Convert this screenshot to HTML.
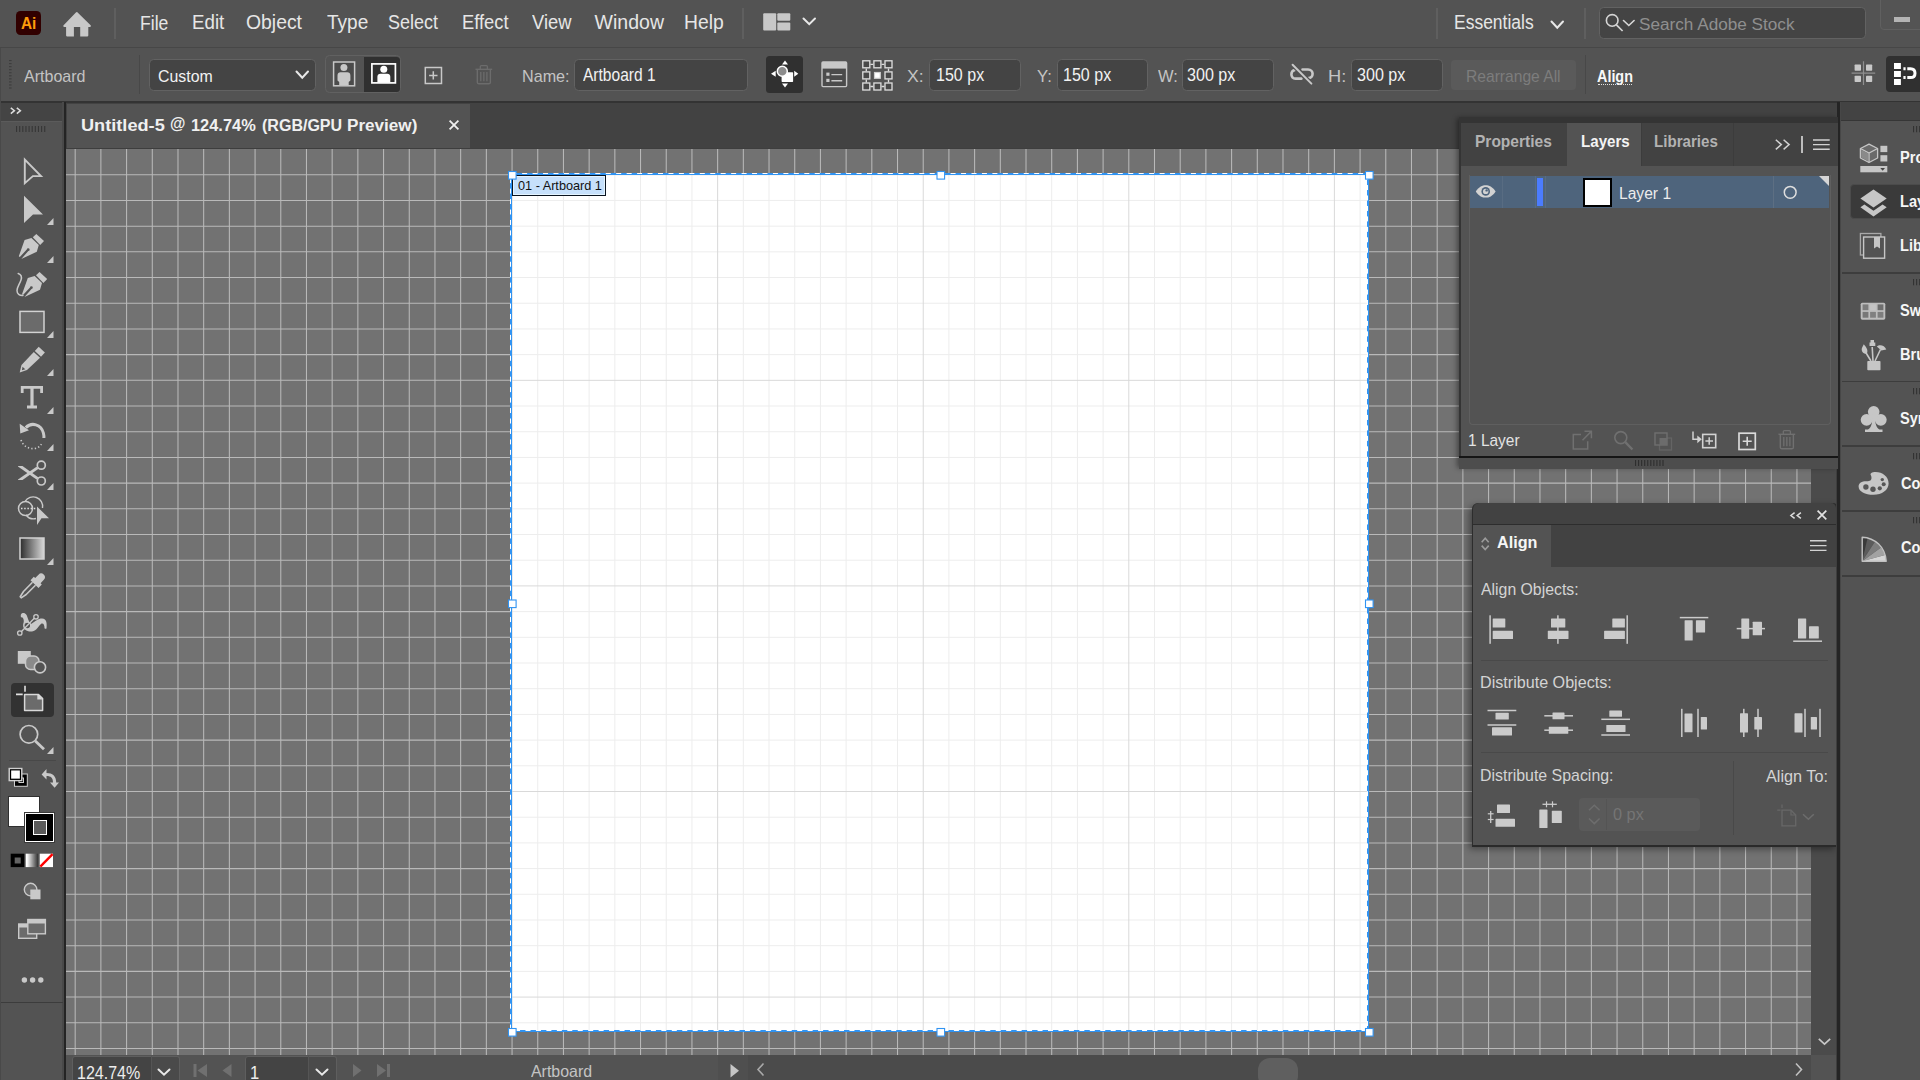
<!DOCTYPE html>
<html lang="en"><head><meta charset="utf-8"><title>Untitled-5 @ 124.74% (RGB/GPU Preview)</title>
<style>
html,body{margin:0;padding:0;}
body{width:1920px;height:1080px;overflow:hidden;position:relative;background:#535353;font-family:"Liberation Sans",sans-serif;}
div,svg,span{position:absolute;box-sizing:border-box;}
.t{white-space:pre;line-height:1;transform-origin:0 0;}
svg{overflow:visible;}

</style></head>
<body>
<div style="left:0px;top:0px;width:1920px;height:47px;background:#535353;"></div>
<div style="left:0px;top:47px;width:1920px;height:1px;background:#474747;"></div>
<div style="left:0px;top:48px;width:1920px;height:53px;background:#535353;"></div>
<div style="left:0px;top:100.8px;width:1920px;height:2.2px;background:#333;"></div>
<div style="left:66px;top:103px;width:1772px;height:46px;background:#424242;"></div>
<div style="left:67px;top:104px;width:403px;height:45px;background:#535353;"></div>
<div style="left:66px;top:148px;width:1772px;height:1px;background:#3e3e3e;"></div>
<div style="left:66px;top:149px;width:1745px;height:906px;background:#727272;overflow:hidden"><svg style="left:0;top:0" width="1745" height="906"><path d="M9.18 0V906M34.88 0V906M60.58 0V906M86.28 0V906M111.98 0V906M137.67 0V906M163.37 0V906M189.07 0V906M214.77 0V906M240.47 0V906M266.16 0V906M291.86 0V906M317.56 0V906M343.26 0V906M368.96 0V906M394.65 0V906M420.35 0V906M446.05 0V906M471.75 0V906M497.45 0V906M523.14 0V906M548.84 0V906M574.54 0V906M600.24 0V906M625.94 0V906M651.63 0V906M677.33 0V906M703.03 0V906M728.73 0V906M754.43 0V906M780.12 0V906M805.82 0V906M831.52 0V906M857.22 0V906M882.92 0V906M908.61 0V906M934.31 0V906M960.01 0V906M985.71 0V906M1011.41 0V906M1037.10 0V906M1062.80 0V906M1088.50 0V906M1114.20 0V906M1139.90 0V906M1165.59 0V906M1191.29 0V906M1216.99 0V906M1242.69 0V906M1268.39 0V906M1294.08 0V906M1319.78 0V906M1345.48 0V906M1371.18 0V906M1396.88 0V906M1422.57 0V906M1448.27 0V906M1473.97 0V906M1499.67 0V906M1525.37 0V906M1551.06 0V906M1576.76 0V906M1602.46 0V906M1628.16 0V906M1653.86 0V906M1679.55 0V906M1705.25 0V906M1730.95 0V906M0 25.75H1745M0 51.45H1745M0 77.15H1745M0 102.84H1745M0 128.54H1745M0 154.24H1745M0 179.94H1745M0 205.64H1745M0 231.33H1745M0 257.03H1745M0 282.73H1745M0 308.43H1745M0 334.13H1745M0 359.82H1745M0 385.52H1745M0 411.22H1745M0 436.92H1745M0 462.62H1745M0 488.31H1745M0 514.01H1745M0 539.71H1745M0 565.41H1745M0 591.11H1745M0 616.80H1745M0 642.50H1745M0 668.20H1745M0 693.90H1745M0 719.60H1745M0 745.29H1745M0 770.99H1745M0 796.69H1745M0 822.39H1745M0 848.09H1745M0 873.78H1745M0 899.48H1745" stroke="#fff" stroke-opacity="0.5" stroke-width="1.05" fill="none"/></svg></div>
<div style="left:512px;top:175px;width:857px;height:857px;background:#fff;overflow:hidden"><svg style="left:0;top:0" width="857" height="857"><path d="M25.75 0V857M0 25.45H857M51.45 0V857M0 51.15H857M77.14 0V857M0 76.84H857M102.84 0V857M0 102.54H857M128.54 0V857M0 128.24H857M154.24 0V857M0 153.94H857M179.94 0V857M0 179.64H857M231.33 0V857M0 231.03H857M257.03 0V857M0 256.73H857M282.73 0V857M0 282.43H857M308.43 0V857M0 308.13H857M334.12 0V857M0 333.82H857M359.82 0V857M0 359.52H857M385.52 0V857M0 385.22H857M436.92 0V857M0 436.62H857M462.61 0V857M0 462.31H857M488.31 0V857M0 488.01H857M514.01 0V857M0 513.71H857M539.71 0V857M0 539.41H857M565.41 0V857M0 565.11H857M591.10 0V857M0 590.80H857M642.50 0V857M0 642.20H857M668.20 0V857M0 667.90H857M693.90 0V857M0 693.60H857M719.59 0V857M0 719.29H857M745.29 0V857M0 744.99H857M770.99 0V857M0 770.69H857M796.69 0V857M0 796.39H857M848.08 0V857M0 847.78H857" stroke="#ededed" fill="none"/><path d="M0.05 0V857M0 -0.25H857M205.63 0V857M0 205.33H857M411.22 0V857M0 410.92H857M616.80 0V857M0 616.50H857M822.39 0V857M0 822.09H857" stroke="#d9d9d9" fill="none"/></svg></div>
<div style="left:512px;top:175px;width:94.3px;height:21px;background:#c6e0fb;border:1px solid #0a1420;box-shadow:inset 0 0 0 1px #e4f4ff;"></div>
<span class="t" style="left:517.58px;top:178.56px;font-size:13.4px;color:#111;transform:scaleX(0.9472);">01 - Artboard 1</span>
<svg style="left:512px;top:175px;" width="857" height="857" viewBox="0 0 857 857"><rect x="-0.5" y="-0.5" width="857" height="857" fill="none" stroke="#3093f2" stroke-width="1"/><rect x="-1.5" y="-1.5" width="857" height="857" fill="none" stroke="#3093f2" stroke-width="1"/><rect x="-1.5" y="-1.5" width="857" height="857" fill="none" stroke="#fff" stroke-width="1" stroke-dasharray="5 5.45" stroke-dashoffset="-1.2"/><rect x="-3.5" y="-3.5" width="7.6" height="7.6" fill="#fff" stroke="#3093f2" stroke-width="1.1"/><rect x="425.0" y="-3.5" width="7.6" height="7.6" fill="#fff" stroke="#3093f2" stroke-width="1.1"/><rect x="853.5" y="-3.5" width="7.6" height="7.6" fill="#fff" stroke="#3093f2" stroke-width="1.1"/><rect x="-3.5" y="425.0" width="7.6" height="7.6" fill="#fff" stroke="#3093f2" stroke-width="1.1"/><rect x="853.5" y="425.0" width="7.6" height="7.6" fill="#fff" stroke="#3093f2" stroke-width="1.1"/><rect x="-3.5" y="853.5" width="7.6" height="7.6" fill="#fff" stroke="#3093f2" stroke-width="1.1"/><rect x="425.0" y="853.5" width="7.6" height="7.6" fill="#fff" stroke="#3093f2" stroke-width="1.1"/><rect x="853.5" y="853.5" width="7.6" height="7.6" fill="#fff" stroke="#3093f2" stroke-width="1.1"/></svg>
<div style="left:1811px;top:149px;width:26px;height:906px;background:#4b4b4b;"></div>
<div style="left:66px;top:1055px;width:1771px;height:25px;background:#535353;"></div>
<div style="left:748px;top:1055px;width:1063px;height:25px;background:#4b4b4b;"></div>
<div style="left:1258px;top:1058px;width:40px;height:30px;background:#5f5f5f;border-radius:12px;"></div>
<div style="left:718px;top:1055px;width:30px;height:25px;background:#4f4f4f;"></div>
<div style="left:72px;top:1056px;width:80px;height:30px;background:#444;border:1px solid #5e5e5e;border-radius:3px 0 0 0;"></div>
<div style="left:151px;top:1056px;width:29px;height:30px;background:#4a4a4a;border:1px solid #5e5e5e;border-left:1px solid #555;border-radius:0 3px 0 0;"></div>
<span class="t" style="left:76.56px;top:1065.30px;font-size:17.6px;color:#ededed;transform:scaleX(0.9113);">124.74%</span>
<div style="left:245px;top:1056px;width:64px;height:30px;background:#444;border:1px solid #5e5e5e;border-radius:3px 0 0 0;"></div>
<div style="left:308px;top:1056px;width:29px;height:30px;background:#4a4a4a;border:1px solid #5e5e5e;border-left:1px solid #555;border-radius:0 3px 0 0;"></div>
<span class="t" style="left:250.42px;top:1065.30px;font-size:17.6px;color:#ededed;transform:scaleX(0.9400);">1</span>
<span class="t" style="left:530.53px;top:1062.83px;font-size:16.5px;color:#c4c4c4;transform:scaleX(0.9647);">Artboard</span>
<svg style="left:158.3px;top:1069.05px;" width="12" height="6.5" viewBox="0 0 12 6.5"><path d="M0.5 0.5L6.0 5.7L11.5 0.5" fill="none" stroke="#e8e8e8" stroke-width="2" stroke-linecap="round" stroke-linejoin="miter"/></svg>
<svg style="left:316.3px;top:1069.05px;" width="12" height="6.5" viewBox="0 0 12 6.5"><path d="M0.5 0.5L6.0 5.7L11.5 0.5" fill="none" stroke="#e8e8e8" stroke-width="2" stroke-linecap="round" stroke-linejoin="miter"/></svg>
<svg style="left:193px;top:1064px;" width="45" height="14" viewBox="0 0 45 14"><rect x="0.5" y="0" width="3" height="13" fill="#707070"/><path d="M14 0V13L4.5 6.5Z" fill="#707070"/><path d="M38.5 0V13L29.5 6.5Z" fill="#707070"/></svg>
<svg style="left:353px;top:1064px;" width="45" height="14" viewBox="0 0 45 14"><path d="M0 0V13L8.5 6.5Z" fill="#707070"/><path d="M24 0V13L33 6.5Z" fill="#707070"/><rect x="34" y="0" width="3" height="13" fill="#707070"/></svg>
<svg style="left:729.5px;top:1064px;" width="10" height="14" viewBox="0 0 10 14"><path d="M0.5 0V13.5L9 6.75Z" fill="#c6c6c6"/></svg>
<svg style="left:756.5px;top:1062.5px;" width="8" height="13" viewBox="0 0 8 13"><path d="M6.5 0.5L1 6.5L6.5 12.5" fill="none" stroke="#a8a8a8" stroke-width="1.6"/></svg>
<svg style="left:1795px;top:1062.5px;" width="8" height="13" viewBox="0 0 8 13"><path d="M1 0.5L6.5 6.5L1 12.5" fill="none" stroke="#c0c0c0" stroke-width="1.6"/></svg>
<svg style="left:1818px;top:1038px;" width="13" height="8" viewBox="0 0 13 8"><path d="M0.8 0.8L6.5 6.2L12.2 0.8" fill="none" stroke="#c8c8c8" stroke-width="1.7"/></svg>
<div style="left:1811px;top:1055px;width:26px;height:25px;background:#535353;"></div>
<span class="t" style="left:140.28px;top:13.89px;font-size:19.5px;color:#e6e6e6;transform:scaleX(0.9016);">File</span>
<span class="t" style="left:192.02px;top:12.89px;font-size:19.5px;color:#e6e6e6;transform:scaleX(0.9605);">Edit</span>
<span class="t" style="left:246.21px;top:12.89px;font-size:19.5px;color:#e6e6e6;transform:scaleX(0.9937);">Object</span>
<span class="t" style="left:326.87px;top:12.89px;font-size:19.5px;color:#e6e6e6;transform:scaleX(0.9749);">Type</span>
<span class="t" style="left:388.13px;top:12.89px;font-size:19.5px;color:#e6e6e6;transform:scaleX(0.9209);">Select</span>
<span class="t" style="left:461.62px;top:12.89px;font-size:19.5px;color:#e6e6e6;transform:scaleX(0.9395);">Effect</span>
<span class="t" style="left:531.98px;top:12.89px;font-size:19.5px;color:#e6e6e6;transform:scaleX(0.9400);">View</span>
<span class="t" style="left:594.62px;top:12.89px;font-size:19.5px;color:#e6e6e6;">Window</span>
<span class="t" style="left:684.43px;top:12.89px;font-size:19.5px;color:#e6e6e6;transform:scaleX(0.9906);">Help</span>
<div style="left:1599.2px;top:6.6px;width:267.2px;height:32.3px;background:#444;border:1.4px solid #626262;border-radius:4.5px;"></div>
<span class="t" style="left:1454.29px;top:13.39px;font-size:19.5px;color:#e6e6e6;transform:scaleX(0.8961);">Essentials</span>
<span class="t" style="left:1638.56px;top:15.66px;font-size:17.3px;color:#8f8f8f;transform:scaleX(0.9931);">Search Adobe Stock</span>
<div style="left:113.5px;top:8px;width:2px;height:31px;background:#5f5f5f;"></div>
<div style="left:741.5px;top:8px;width:2px;height:31px;background:#5f5f5f;"></div>
<div style="left:1435.5px;top:8px;width:2px;height:31px;background:#5f5f5f;"></div>
<div style="left:1583.5px;top:8px;width:2px;height:31px;background:#5f5f5f;"></div>
<div style="left:1880px;top:-4px;width:50px;height:33.5px;background:#545454;border:1px solid #606060;border-radius:4px;"></div>
<div style="left:1894px;top:17px;width:16px;height:5px;background:#b4b4b4;"></div>
<svg style="left:803.05px;top:18.0px;" width="12.5" height="7" viewBox="0 0 12.5 7"><path d="M0.5 0.5L6.25 6.2L12.0 0.5" fill="none" stroke="#e8e8e8" stroke-width="2" stroke-linecap="round" stroke-linejoin="miter"/></svg>
<svg style="left:1550.75px;top:21.05px;" width="12.5" height="7.5" viewBox="0 0 12.5 7.5"><path d="M0.5 0.5L6.25 6.7L12.0 0.5" fill="none" stroke="#e8e8e8" stroke-width="2" stroke-linecap="round" stroke-linejoin="miter"/></svg>
<svg style="left:1623.1000000000001px;top:19.950000000000003px;" width="11.6" height="6.3" viewBox="0 0 11.6 6.3"><path d="M0.5 0.5L5.8 5.5L11.1 0.5" fill="none" stroke="#d8d8d8" stroke-width="1.6" stroke-linecap="round" stroke-linejoin="miter"/></svg>
<span class="t" style="left:24.03px;top:68.85px;font-size:16.6px;color:#c4c4c4;transform:scaleX(0.9668);">Artboard</span>
<div style="left:149.1px;top:58.6px;width:167.3px;height:32.199999999999996px;background:#444444;border:1.4px solid #626262;border-radius:4.5px;"></div>
<span class="t" style="left:158.26px;top:68.85px;font-size:16.6px;color:#f2f2f2;transform:scaleX(0.9570);">Custom</span>
<svg style="left:296.05px;top:71.25px;" width="12.5" height="7.5" viewBox="0 0 12.5 7.5"><path d="M0.5 0.5L6.25 6.7L12.0 0.5" fill="none" stroke="#e8e8e8" stroke-width="2" stroke-linecap="round" stroke-linejoin="miter"/></svg>
<div style="left:325.2px;top:55.3px;width:76.2px;height:37.6px;background:#535353;border:1.3px solid #616161;border-radius:4.5px;"></div>
<div style="left:364.4px;top:56.6px;width:35.8px;height:35px;background:#303030;border-radius:0 3.5px 3.5px 0;"></div>
<span class="t" style="left:521.75px;top:68.85px;font-size:16.6px;color:#c4c4c4;transform:scaleX(0.9738);">Name:</span>
<div style="left:574.1px;top:58.6px;width:173.8px;height:32.199999999999996px;background:#444444;border:1.4px solid #626262;border-radius:4.5px;"></div>
<span class="t" style="left:582.59px;top:67.13px;font-size:17.8px;color:#f2f2f2;transform:scaleX(0.8746);">Artboard 1</span>
<div style="left:766.2px;top:55.5px;width:37px;height:37px;background:#303030;border-radius:3.5px;"></div>
<span class="t" style="left:907.32px;top:68.85px;font-size:16.6px;color:#c4c4c4;transform:scaleX(1.0632);">X:</span>
<div style="left:929.1px;top:58.6px;width:91.8px;height:32.199999999999996px;background:#444444;border:1.4px solid #626262;border-radius:4.5px;"></div>
<span class="t" style="left:935.53px;top:67.13px;font-size:17.8px;color:#f2f2f2;transform:scaleX(0.9018);">150 px</span>
<span class="t" style="left:1036.63px;top:68.85px;font-size:16.6px;color:#c4c4c4;transform:scaleX(1.0091);">Y:</span>
<div style="left:1056.6px;top:58.6px;width:91.3px;height:32.199999999999996px;background:#444444;border:1.4px solid #626262;border-radius:4.5px;"></div>
<span class="t" style="left:1062.53px;top:67.13px;font-size:17.8px;color:#f2f2f2;transform:scaleX(0.9018);">150 px</span>
<span class="t" style="left:1158.09px;top:68.85px;font-size:16.6px;color:#c4c4c4;transform:scaleX(0.9919);">W:</span>
<div style="left:1182.1px;top:58.6px;width:91.8px;height:32.199999999999996px;background:#444444;border:1.4px solid #626262;border-radius:4.5px;"></div>
<span class="t" style="left:1187.30px;top:67.13px;font-size:17.8px;color:#f2f2f2;transform:scaleX(0.9063);">300 px</span>
<span class="t" style="left:1327.80px;top:68.85px;font-size:16.6px;color:#c4c4c4;transform:scaleX(1.1026);">H:</span>
<div style="left:1350.6px;top:58.6px;width:92.3px;height:32.199999999999996px;background:#444444;border:1.4px solid #626262;border-radius:4.5px;"></div>
<span class="t" style="left:1356.80px;top:67.13px;font-size:17.8px;color:#f2f2f2;transform:scaleX(0.9058);">300 px</span>
<div style="left:1451px;top:60px;width:125px;height:30px;background:#5a5a5a;border-radius:4px;"></div>
<span class="t" style="left:1466.34px;top:68.85px;font-size:16.6px;color:#7d7d7d;transform:scaleX(0.9406);">Rearrange All</span>
<div style="left:1584.5px;top:55px;width:1px;height:39px;background:#484848;"></div>
<div style="left:139px;top:55px;width:1px;height:39px;background:#484848;"></div>
<span class="t" style="left:1596.59px;top:68.85px;font-size:16.6px;color:#f8f8f8;font-weight:bold;transform:scaleX(0.8664);">Align</span>
<div style="left:1597.5px;top:83.5px;width:34.5px;height:1.5px;border-top:1.5px dotted #e0e0e0;"></div>
<div style="left:1886px;top:55.7px;width:40px;height:36.8px;background:#303030;border-radius:4px;"></div>
<span class="t" style="left:80.95px;top:117.88px;font-size:16.8px;color:#f0f0f0;font-weight:bold;transform:scaleX(1.0827);">Untitled-5</span>
<span class="t" style="left:169.58px;top:115.88px;font-size:16.8px;color:#f0f0f0;font-weight:bold;transform:scaleX(0.9400);">@</span>
<span class="t" style="left:191.04px;top:117.88px;font-size:16.8px;color:#f0f0f0;font-weight:bold;transform:scaleX(0.9774);">124.74%</span>
<span class="t" style="left:261.61px;top:117.88px;font-size:16.8px;color:#f0f0f0;font-weight:bold;transform:scaleX(0.9551);">(RGB/GPU</span>
<span class="t" style="left:347.32px;top:117.88px;font-size:16.8px;color:#f0f0f0;font-weight:bold;transform:scaleX(1.0191);">Preview)</span>
<svg style="left:449px;top:119.6px;" width="10" height="10" viewBox="0 0 10 10"><path d="M0.6 0.6L9.4 9.4M9.4 0.6L0.6 9.4" stroke="#efefef" stroke-width="1.8" fill="none"/></svg>
<div style="left:16px;top:11.4px;width:24.8px;height:23.8px;background:#310000;border-radius:4.5px;"></div>
<span class="t" style="left:20.99px;top:15.19px;font-size:16.2px;color:#ff9d0a;font-weight:bold;transform:scaleX(0.9500);">Ai</span>
<svg style="left:62px;top:11px;" width="30" height="26" viewBox="0 0 30 26"><path d="M15.1 1L28.6 14.2C29.3 15 28.8 15.9 27.9 15.9H26.3V24.6C26.3 25.1 26 25.4 25.5 25.4H18.2V16H11.9V25.4H4.9C4.4 25.4 4.1 25.1 4.1 24.6V15.9H2.3C1.4 15.9 0.9 15 1.6 14.2L13.9 1.5C14.3 1 14.7 0.8 15.1 1Z" fill="#c8c8c8"/></svg>
<svg style="left:763px;top:13px;" width="28" height="18" viewBox="0 0 28 18"><rect x="0.2" y="0.2" width="13" height="17.4" rx="1" fill="#c8c8c8"/><rect x="14.3" y="0.2" width="13" height="7.6" rx="1" fill="#c8c8c8"/><rect x="14.3" y="9.5" width="13" height="8.1" rx="1" fill="#c8c8c8"/></svg>
<svg style="left:1605px;top:13px;" width="19" height="19" viewBox="0 0 19 19"><circle cx="7.2" cy="7.4" r="5.8" fill="none" stroke="#d4d4d4" stroke-width="1.6"/><path d="M11.4 11.8L17.6 18" stroke="#d4d4d4" stroke-width="1.7"/></svg>
<svg style="left:332px;top:60px;" width="24" height="27" viewBox="0 0 24 27"><rect x="1.6" y="2" width="21" height="23.8" fill="#4b4b4b" stroke="#c8c8c8" stroke-width="1.5"/><circle cx="11.9" cy="7.6" r="3.5" fill="#c8c8c8"/><path d="M5.5 15.5C5.5 13.5 6.8 12.3 8.5 12.3H15.4C17.1 12.3 18.4 13.5 18.4 15.5V20.5L16.7 22V25H7.2V22L5.5 20.5Z" fill="#c8c8c8"/></svg>
<svg style="left:370px;top:62px;" width="28" height="23" viewBox="0 0 28 23"><rect x="1.9" y="1.9" width="23.5" height="19" fill="#303030" stroke="#fff" stroke-width="1.7"/><circle cx="13.8" cy="7.3" r="3.5" fill="#fff"/><path d="M7.4 20.5V14.8C7.4 12.8 8.6 11.7 10.4 11.7H17.3C19.1 11.7 20.3 12.8 20.3 14.8V20.5Z" fill="#fff"/></svg>
<svg style="left:424px;top:66px;" width="19" height="19" viewBox="0 0 19 19"><rect x="1.3" y="1.5" width="16.2" height="16" fill="none" stroke="#c8c8c8" stroke-width="1.5"/><path d="M9.3 5.2V13.6M5.1 9.4H13.5" stroke="#c8c8c8" stroke-width="1.5"/></svg>
<svg style="left:474.7px;top:64.8px;" width="18.0" height="20.0" viewBox="0 0 18.0 20.0"><g transform="scale(1.0)"><path d="M0.5 4.3H17.2" stroke="#6c6c6c" stroke-width="1.4"/><path d="M5.3 4V1.6C5.3 1 5.7 0.7 6.3 0.7H11.4C12 0.7 12.4 1 12.4 1.6V4" fill="none" stroke="#6c6c6c" stroke-width="1.3"/><path d="M2.3 4.5V17.2C2.3 18.2 3 18.8 4 18.8H13.7C14.7 18.8 15.4 18.2 15.4 17.2V4.5" fill="none" stroke="#6c6c6c" stroke-width="1.4"/><path d="M5.8 7V16.2M8.85 7V16.2M11.9 7V16.2" stroke="#6c6c6c" stroke-width="1.3"/></g></svg>
<svg style="left:765.6px;top:54.7px;" width="38" height="38" viewBox="0 0 38 38"><rect x="15.6" y="17.3" width="11.5" height="9.6" rx="0.6" fill="#fff"/><circle cx="16.3" cy="16.2" r="5" fill="#8c8c8c" stroke="#fff" stroke-width="1.5"/><path d="M16 9.6L19 5.5L22 9.6ZM16 28.5L19 32.6L22 28.5ZM9.7 15.8L5 18.8L9.7 21.8ZM28.2 15.8L32.3 18.8L28.2 21.8Z" fill="#fff"/></svg>
<svg style="left:821px;top:61px;" width="27" height="27" viewBox="0 0 27 27"><rect x="1" y="1" width="24.6" height="24.6" rx="1" fill="#4b4b4b" stroke="#c8c8c8" stroke-width="1.4"/><rect x="1" y="1" width="24.6" height="6.6" fill="#c8c8c8"/><rect x="5.3" y="11.6" width="3.2" height="3.2" fill="#c8c8c8"/><rect x="5.3" y="17.8" width="3.2" height="3.2" fill="#c8c8c8"/><path d="M10.4 13.6H21.2M10.4 19.8H21.2" stroke="#c8c8c8" stroke-width="1.4"/></svg>
<svg style="left:861.7px;top:59.7px;" width="32" height="32" viewBox="0 0 32 32"><rect x="0.8" y="0.8" width="7" height="7" fill="#484848" stroke="#dcdcdc" stroke-width="1.35"/><rect x="11.9" y="0.8" width="7" height="7" fill="#484848" stroke="#dcdcdc" stroke-width="1.35"/><rect x="23.0" y="0.8" width="7" height="7" fill="#484848" stroke="#dcdcdc" stroke-width="1.35"/><rect x="0.8" y="11.9" width="7" height="7" fill="#484848" stroke="#dcdcdc" stroke-width="1.35"/><rect x="12.5" y="12.5" width="5.8" height="5.8" fill="#fff" stroke="#cfcfcf" stroke-width="1.2"/><rect x="23.0" y="11.9" width="7" height="7" fill="#484848" stroke="#dcdcdc" stroke-width="1.35"/><rect x="0.8" y="23.0" width="7" height="7" fill="#484848" stroke="#dcdcdc" stroke-width="1.35"/><rect x="11.9" y="23.0" width="7" height="7" fill="#484848" stroke="#dcdcdc" stroke-width="1.35"/><rect x="23.0" y="23.0" width="7" height="7" fill="#484848" stroke="#dcdcdc" stroke-width="1.35"/><path d="M8.4 4.3H11.3M19.5 4.3H22.4M8.4 26.5H11.3M19.5 26.5H22.4M4.3 8.4V11.3M4.3 19.5V22.4M26.5 8.4V11.3M26.5 19.5V22.4" stroke="#dcdcdc" stroke-width="1.35"/></svg>
<svg style="left:1289px;top:63px;" width="26" height="22" viewBox="0 0 26 22"><path d="M13.5 6.5H19C22 6.5 23.6 8.5 23.6 10.8C23.6 13.2 22 15 19.5 15" fill="none" stroke="#c8c8c8" stroke-width="2.6" stroke-linecap="round"/><path d="M12.5 15.6H6.5C3.8 15.6 2.4 13.6 2.4 11.3C2.4 9 3.8 7.3 6 7" fill="none" stroke="#c8c8c8" stroke-width="2.6" stroke-linecap="round"/><path d="M3.6 1.8L22.4 20.6" stroke="#535353" stroke-width="4.4"/><path d="M3.6 1.8L22.4 20.6" stroke="#c8c8c8" stroke-width="2" stroke-linecap="round"/></svg>
<svg style="left:1851px;top:61px;" width="25" height="25" viewBox="0 0 25 25"><path d="M12.5 0.3V24M0.6 12.1H24.2" stroke="#8f8f8f" stroke-width="1.2"/><rect x="3.6" y="3.6" width="6.4" height="6.2" rx="0.7" fill="#c8c8c8"/><rect x="15" y="3.6" width="6.2" height="6.2" rx="0.7" fill="#c8c8c8"/><rect x="3.6" y="14.7" width="6.4" height="6.3" rx="0.7" fill="#c8c8c8"/><rect x="15" y="14.7" width="6.2" height="6.3" rx="0.7" fill="#c8c8c8"/></svg>
<svg style="left:1893px;top:62px;" width="28" height="24" viewBox="0 0 28 24"><rect x="1" y="1" width="6.9" height="6" fill="#fff"/><rect x="1" y="9" width="6.9" height="6" fill="#fff"/><rect x="1" y="17" width="6.9" height="6" fill="#fff"/><path d="M10.4 6.7H12.6M10.4 15.6H12.6" stroke="#fff" stroke-width="3"/><path d="M14.3 6.7H17.5C20.5 6.7 22 8.7 22 11.2C22 13.6 20.5 15.6 17.5 15.6H14.3" fill="none" stroke="#fff" stroke-width="3"/></svg>
<svg style="left:8.7px;top:60.3px;" width="3" height="29" viewBox="0 0 3 29"><rect x="0" y="0.00" width="2.6" height="1.1" fill="#3d3d3d"/><rect x="0" y="3.05" width="2.6" height="1.1" fill="#3d3d3d"/><rect x="0" y="6.10" width="2.6" height="1.1" fill="#3d3d3d"/><rect x="0" y="9.15" width="2.6" height="1.1" fill="#3d3d3d"/><rect x="0" y="12.20" width="2.6" height="1.1" fill="#3d3d3d"/><rect x="0" y="15.25" width="2.6" height="1.1" fill="#3d3d3d"/><rect x="0" y="18.30" width="2.6" height="1.1" fill="#3d3d3d"/><rect x="0" y="21.35" width="2.6" height="1.1" fill="#3d3d3d"/><rect x="0" y="24.40" width="2.6" height="1.1" fill="#3d3d3d"/><rect x="0" y="27.45" width="2.6" height="1.1" fill="#3d3d3d"/></svg>
<div style="left:0px;top:103px;width:63px;height:977px;background:#535353;"></div>
<div style="left:0px;top:48px;width:1px;height:1032px;background:#494949;"></div>
<div style="left:1px;top:102.5px;width:62px;height:18px;background:#444;"></div>
<div style="left:1px;top:120.5px;width:62px;height:1px;background:#5b5b5b;"></div>
<div style="left:62.2px;top:102px;width:1.9px;height:978px;background:#494949;"></div>
<div style="left:64px;top:102px;width:2px;height:978px;background:#242424;"></div>
<div style="left:1px;top:1002px;width:62px;height:1.3px;background:#3c3c3c;"></div>
<svg style="left:10px;top:107px;" width="12" height="8" viewBox="0 0 12 8"><path d="M0.8 0.8L4.4 3.7L0.8 6.6M6.8 0.8L10.4 3.7L6.8 6.6" fill="none" stroke="#dcdcdc" stroke-width="1.5"/></svg>
<svg style="left:15.8px;top:126px;" width="30" height="6" viewBox="0 0 30 6"><rect x="0.00" y="0" width="1.1" height="6" fill="#363636"/><rect x="3.13" y="0" width="1.1" height="6" fill="#363636"/><rect x="6.26" y="0" width="1.1" height="6" fill="#363636"/><rect x="9.39" y="0" width="1.1" height="6" fill="#363636"/><rect x="12.52" y="0" width="1.1" height="6" fill="#363636"/><rect x="15.65" y="0" width="1.1" height="6" fill="#363636"/><rect x="18.78" y="0" width="1.1" height="6" fill="#363636"/><rect x="21.91" y="0" width="1.1" height="6" fill="#363636"/><rect x="25.04" y="0" width="1.1" height="6" fill="#363636"/><rect x="28.17" y="0" width="1.1" height="6" fill="#363636"/></svg>
<svg style="left:0px;top:150px;" width="64" height="80" viewBox="0 0 64 80"><path d="M24.8 9.6L24.8 33.2L32.9 26.1L41 26.1Z" fill="none" stroke="#c9c9c9" stroke-width="1.9" stroke-linejoin="miter"/><path d="M24 45.7V73L33 64.6H43Z" fill="#c9c9c9"/></svg>
<svg style="left:46.7px;top:217.7px;" width="6.5" height="6.9" viewBox="0 0 6.5 6.9"><path d="M6.5 0V6.9H0Z" fill="#c9c9c9"/></svg>
<svg style="left:0px;top:225px;" width="64" height="80" viewBox="0 0 64 80"><g transform="translate(18.8 8.8)"><path d="M0 22.5L5.8 6.2L12.6 4.3L20 11.2L18 18L2.5 25.2L9.5 17.2A1.4 1.4 0 1 0 8 15.8L1 23.2Z" fill="#c9c9c9"/><path d="M14 3.4L17.5 0.2L25.2 7.3L21.4 11.3Z" fill="#c9c9c9"/></g><g transform="translate(22 46.8)"><path d="M0 22.5L5.8 6.2L12.6 4.3L20 11.2L18 18L2.5 25.2L9.5 17.2A1.4 1.4 0 1 0 8 15.8L1 23.2Z" fill="#c9c9c9"/><path d="M14 3.4L17.5 0.2L25.2 7.3L21.4 11.3Z" fill="#c9c9c9"/></g><path d="M18.2 48.5C21 49.5 22 52 21 55C19.5 59.5 17 62 17 65.5C17 69 19.5 70.6 23 70.4" fill="none" stroke="#c9c9c9" stroke-width="1.5" stroke-linecap="round"/></svg>
<svg style="left:46.7px;top:255.49999999999997px;" width="6.5" height="6.9" viewBox="0 0 6.5 6.9"><path d="M6.5 0V6.9H0Z" fill="#c9c9c9"/></svg>
<svg style="left:0px;top:300px;" width="64" height="80" viewBox="0 0 64 80"><rect x="20" y="11.4" width="24" height="21" fill="#6b6b6b" stroke="#d2d2d2" stroke-width="1.5"/><g transform="translate(19.5 46.5)"><path d="M15.3 4.6L19.2 0.3L25.4 5.9L21.5 10.2Z" fill="#c9c9c9"/><path d="M14.3 5.6L20.5 11.2L7.5 23.5L0.2 26L2 18.5Z" fill="#c9c9c9"/><path d="M3 20.2L5.8 22.7L2.4 23.8Z" fill="#535353"/></g></svg>
<svg style="left:46.7px;top:330.6px;" width="6.5" height="6.9" viewBox="0 0 6.5 6.9"><path d="M6.5 0V6.9H0Z" fill="#c9c9c9"/></svg>
<svg style="left:46.7px;top:368.6px;" width="6.5" height="6.9" viewBox="0 0 6.5 6.9"><path d="M6.5 0V6.9H0Z" fill="#c9c9c9"/></svg>
<svg style="left:0px;top:375px;" width="64" height="80" viewBox="0 0 64 80"><path d="M20.8 11H43V18H40.2V13.8H33.6V30.5H37V33.6H27V30.5H30.4V13.8H23.6V18H20.8Z" fill="#c9c9c9"/><path d="M25.8 52.6C31.5 46.8 41.2 49.2 43.4 58C43.9 60 44 61.5 43.9 63" fill="none" stroke="#c9c9c9" stroke-width="3"/><path d="M19.7 48.8L29 55.2L20.3 58.4Z" fill="#c9c9c9"/><path d="M21 65C23 71 29 74.5 35 73.5C38.5 73 41 70.5 42.5 67" fill="none" stroke="#c9c9c9" stroke-width="1.6" stroke-dasharray="1.3 2.2"/></svg>
<svg style="left:46.7px;top:406.6px;" width="6.5" height="6.9" viewBox="0 0 6.5 6.9"><path d="M6.5 0V6.9H0Z" fill="#c9c9c9"/></svg>
<svg style="left:46.7px;top:444.1px;" width="6.5" height="6.9" viewBox="0 0 6.5 6.9"><path d="M6.5 0V6.9H0Z" fill="#c9c9c9"/></svg>
<svg style="left:0px;top:450px;" width="64" height="80" viewBox="0 0 64 80"><circle cx="41.3" cy="15.2" r="4" fill="none" stroke="#c9c9c9" stroke-width="1.7"/><circle cx="41.3" cy="31" r="4" fill="none" stroke="#c9c9c9" stroke-width="1.7"/><path d="M18 16L22.5 16L38.5 27.5L36.5 29.5L18 16.6Z" fill="#c9c9c9"/><path d="M18 30L22.5 30L38.5 18.7L36.5 16.7L18 29.4Z" fill="#c9c9c9"/><circle cx="25.5" cy="58.5" r="7" fill="none" stroke="#c9c9c9" stroke-width="1.5"/><path d="M25 51.5A9.5 9.5 0 0 1 42.5 58" fill="none" stroke="#c9c9c9" stroke-width="1.4"/><path d="M26 65A9.5 9.5 0 0 0 36 68.5" fill="none" stroke="#c9c9c9" stroke-width="1.4"/><path d="M21 58.5H36" stroke="#ddd" stroke-width="1.4" stroke-dasharray="1.5 1.7"/><path d="M37 56.5V75L41.5 68.3H49Z" fill="#c9c9c9"/></svg>
<svg style="left:46.7px;top:482.6px;" width="6.5" height="6.9" viewBox="0 0 6.5 6.9"><path d="M6.5 0V6.9H0Z" fill="#c9c9c9"/></svg>
<svg style="left:0px;top:525px;" width="64" height="80" viewBox="0 0 64 80"><defs><linearGradient id="gr1" x1="0" x2="1" y1="0" y2="0"><stop offset="0" stop-color="#2c2c2c"/><stop offset="1" stop-color="#d8d8d8"/></linearGradient></defs><rect x="20" y="13" width="24" height="21" fill="url(#gr1)" stroke="#d2d2d2" stroke-width="1.5"/><g transform="translate(19 47.5)"><path d="M19.5 2.2A3.6 3.6 0 0 1 24.8 7.3L21.6 10.7L22.8 12L19.5 15.5L11.5 7.8L14.8 4.3L16.2 5.6Z" fill="#c9c9c9"/><path d="M13.5 9.8L4.5 19L1.2 24.2L2.2 25.3L7.2 22L16.5 12.7" fill="none" stroke="#c9c9c9" stroke-width="1.6" stroke-linejoin="round"/></g></svg>
<svg style="left:46.7px;top:557.7px;" width="6.5" height="6.9" viewBox="0 0 6.5 6.9"><path d="M6.5 0V6.9H0Z" fill="#c9c9c9"/></svg>
<svg style="left:0px;top:600px;" width="64" height="80" viewBox="0 0 64 80"><path d="M21 17.5C20 13 23 12.5 25 13.5C28 15 27.5 21 31 24C35.5 21 38 18.5 42 18.5C47 18.5 47 24 46.5 28.5C45.5 29 44.8 29 44.5 28C44.5 25 43.5 23 41.5 23.5C38.5 25.5 37 31 32 31.5C27 32 23 29.5 23.2 25C23.3 22.5 24.5 21.5 23.2 18.5C22.7 17.5 21.7 17 21 17.5Z" fill="#c9c9c9"/><circle cx="27.3" cy="25.6" r="3.3" fill="#535353" stroke="#c9c9c9" stroke-width="1.1"/><path d="M21 32L35 17.5" stroke="#c9c9c9" stroke-width="1.3"/><circle cx="36" cy="16.8" r="2.2" fill="#535353" stroke="#c9c9c9" stroke-width="1.3"/><circle cx="19.8" cy="33" r="2.2" fill="#535353" stroke="#c9c9c9" stroke-width="1.3"/><rect x="17.8" y="51" width="13" height="12.8" fill="#c9c9c9"/><rect x="25.5" y="56" width="13.5" height="13.5" rx="5" fill="#8a8a8a" stroke="#c9c9c9" stroke-width="1.5"/><circle cx="40" cy="67.3" r="5.6" fill="#535353" stroke="#c9c9c9" stroke-width="1.6"/></svg>
<div style="left:10.5px;top:683px;width:43px;height:34px;background:#323232;border-radius:4px;"></div>
<svg style="left:0px;top:675px;" width="64" height="80" viewBox="0 0 64 80"><path d="M24.6 19.5H38.5L42.6 23.6V35.4H24.6Z" fill="#6b6b6b" stroke="#d8d8d8" stroke-width="1.5" stroke-linejoin="round"/><path d="M37.3 19.5V24.6H42.6L38.5 19.5Z" fill="#d8d8d8"/><path d="M25 10.7V16.8M16 19.4H22.7" stroke="#e0e0e0" stroke-width="1.6"/><circle cx="28.9" cy="59.3" r="8.8" fill="none" stroke="#c9c9c9" stroke-width="1.7"/><path d="M35.3 66L44 74.3" stroke="#c9c9c9" stroke-width="2.8"/></svg>
<svg style="left:46.7px;top:746.6px;" width="6.5" height="6.9" viewBox="0 0 6.5 6.9"><path d="M6.5 0V6.9H0Z" fill="#c9c9c9"/></svg>
<div style="left:8.5px;top:760.2px;width:47px;height:1px;background:#484848;"></div>
<svg style="left:0px;top:750px;" width="64" height="45" viewBox="0 0 64 45"><rect x="14.5" y="24" width="12.8" height="12.3" fill="#000" stroke="#cfcfcf" stroke-width="1"/><rect x="19" y="28" width="4.5" height="4.5" fill="none" stroke="#cfcfcf" stroke-width="1"/><rect x="9" y="18.3" width="13" height="12.5" fill="#fff" stroke="#cfcfcf" stroke-width="1"/><rect x="10.5" y="19.8" width="10" height="9.5" fill="#fff" stroke="#000" stroke-width="1.3"/><path d="M46.5 19L41.6 24.5L46.5 29.5V26C51 26 53 28 53 32.5H50L54.6 37.7L59 32.5H56.2C56.2 26 52.5 23 46.5 23Z" fill="#c9c9c9"/></svg>
<div style="left:8.2px;top:796.2px;width:31.6px;height:31px;background:#fff;border:1px solid #2f2f2f;"></div>
<div style="left:25px;top:812.7px;width:29.4px;height:29px;background:#000;border:1px solid #fff;outline:1px solid #3a3a3a;"></div>
<div style="left:32.5px;top:820px;width:14.7px;height:15px;background:#5a5a5a;border:1px solid #fff;"></div>
<svg style="left:10px;top:853px;" width="45" height="15" viewBox="0 0 45 15"><defs><linearGradient id="gr2" x1="0" x2="1" y1="0" y2="0"><stop offset="0.1" stop-color="#fff"/><stop offset="1" stop-color="#333"/></linearGradient></defs><rect x="0.7" y="0.7" width="13.6" height="13.4" fill="#000"/><rect x="4.7" y="4.5" width="6" height="6" fill="#636363"/><rect x="15.7" y="0.7" width="12.3" height="13.4" fill="url(#gr2)"/><rect x="29.7" y="0.7" width="13.3" height="13.4" fill="#fff"/><path d="M30.3 13.6L42.6 1.2" stroke="#f00" stroke-width="2.4"/></svg>
<svg style="left:0px;top:870px;" width="64" height="80" viewBox="0 0 64 80"><circle cx="30.6" cy="19.6" r="6.3" fill="#6b6b6b" stroke="#c9c9c9" stroke-width="1.4"/><rect x="30.3" y="19.5" width="10.2" height="9.8" fill="#c9c9c9"/><rect x="18.7" y="54" width="18" height="14.3" fill="#6b6b6b" stroke="#c9c9c9" stroke-width="1.4"/><rect x="18.7" y="54" width="18" height="3.5" fill="#c9c9c9"/><rect x="27.8" y="49.5" width="17.6" height="14.3" fill="#6b6b6b" stroke="#c9c9c9" stroke-width="1.4"/><rect x="27.8" y="49.5" width="17.6" height="4" fill="#c9c9c9"/></svg>
<svg style="left:20px;top:976px;" width="26" height="8" viewBox="0 0 26 8"><circle cx="4.4" cy="4" r="2.7" fill="#c9c9c9"/><circle cx="12.6" cy="4" r="2.7" fill="#c9c9c9"/><circle cx="20.8" cy="4" r="2.7" fill="#c9c9c9"/></svg>
<div style="left:1459px;top:117px;width:381px;height:351.5px;background:#343434;box-shadow:-3px 0 5px -1px rgba(0,0,0,0.4);"></div>
<div style="left:1461px;top:123px;width:1377px;height:43px;background:#424242;width:377.5px;"></div>
<div style="left:1461px;top:165.7px;width:377.5px;height:290.5px;background:#535353;"></div>
<div style="left:1566.7px;top:123px;width:74.2px;height:43.5px;background:#535353;"></div>
<div style="left:1732.5px;top:123px;width:1px;height:42.7px;background:#3c3c3c;"></div>
<div style="left:1640.9px;top:123px;width:1px;height:42.7px;background:#3c3c3c;"></div>
<span class="t" style="left:1474.51px;top:133.00px;font-size:16.3px;color:#b2b2b2;font-weight:bold;transform:scaleX(0.9533);">Properties</span>
<span class="t" style="left:1580.56px;top:133.00px;font-size:16.3px;color:#f4f4f4;font-weight:bold;transform:scaleX(0.9283);">Layers</span>
<span class="t" style="left:1654.08px;top:133.00px;font-size:16.3px;color:#b2b2b2;font-weight:bold;transform:scaleX(0.9291);">Libraries</span>
<svg style="left:1775px;top:139px;" width="16" height="12" viewBox="0 0 16 12"><path d="M0.8 0.8L6.3 5.6L0.8 10.4M8.6 0.8L14.1 5.6L8.6 10.4" fill="none" stroke="#d2d2d2" stroke-width="1.5"/></svg>
<div style="left:1801.3px;top:135.5px;width:1.6px;height:17.2px;background:#bdbdbd;"></div>
<svg style="left:1813.4px;top:139px;" width="17" height="12" viewBox="0 0 17 12"><path d="M0 1H16.7M0 5.6H16.7M0 10.2H16.7" stroke="#d2d2d2" stroke-width="1.4"/></svg>
<div style="left:1469px;top:175px;width:361.5px;height:249.5px;border:1px solid #5f5f5f;border-radius:0 0 4px 4px;border-top:none;"></div>
<div style="left:1469.8px;top:176px;width:359.4px;height:31.8px;background:#4e647c;"></div>
<div style="left:1501.6px;top:176px;width:1px;height:31.8px;background:#586c82;"></div>
<div style="left:1535px;top:176px;width:1px;height:31.8px;background:#586c82;"></div>
<div style="left:1544.6px;top:176px;width:1px;height:31.8px;background:#586c82;"></div>
<div style="left:1772.7px;top:176px;width:1px;height:31.8px;background:#5d6f83;"></div>
<div style="left:1537.4px;top:177.8px;width:5.3px;height:28.6px;background:#4b7cff;"></div>
<div style="left:1583.3px;top:178.4px;width:28.5px;height:28.6px;background:#fff;border:2px solid #000;"></div>
<span class="t" style="left:1618.88px;top:186.06px;font-size:16px;color:#ececec;transform:scaleX(0.9755);">Layer 1</span>
<svg style="left:1475px;top:184px;" width="22" height="15" viewBox="0 0 22 15"><path d="M0.8 7.4C4 2.6 7.3 1.2 10.7 1.2C14.1 1.2 17.4 2.6 20.6 7.4C17.4 12.2 14.1 13.6 10.7 13.6C7.3 13.6 4 12.2 0.8 7.4Z" fill="#d2d2d2"/><circle cx="10.7" cy="7.4" r="4.3" fill="#4e647c"/><circle cx="10.7" cy="7.4" r="2.7" fill="#d2d2d2"/><circle cx="11.6" cy="6.4" r="1.2" fill="#4e647c"/></svg>
<svg style="left:1783px;top:185px;" width="15" height="15" viewBox="0 0 15 15"><circle cx="7.2" cy="7.3" r="5.9" fill="none" stroke="#dedede" stroke-width="1.5"/></svg>
<svg style="left:1819.3px;top:176px;" width="10" height="10" viewBox="0 0 10 10"><path d="M0 0H10V10Z" fill="#d6d6d6"/></svg>
<span class="t" style="left:1468.16px;top:432.22px;font-size:16.4px;color:#e4e4e4;transform:scaleX(0.9424);">1 Layer</span>
<svg style="left:1572px;top:430px;" width="22" height="21" viewBox="0 0 22 21"><path d="M9 4.6H1.3V19H15.7V11.3" fill="none" stroke="#707070" stroke-width="1.5"/><path d="M10.5 10.2L19 1.6M12.5 1.2H19.4V8.2" fill="none" stroke="#707070" stroke-width="1.5"/></svg>
<svg style="left:1613px;top:430px;" width="22" height="21" viewBox="0 0 22 21"><circle cx="7.8" cy="7.6" r="6" fill="none" stroke="#707070" stroke-width="1.6"/><path d="M12.3 12.2L19.4 19.5" stroke="#707070" stroke-width="2.4"/></svg>
<svg style="left:1654px;top:431.5px;" width="19" height="19" viewBox="0 0 19 19"><rect x="5.5" y="6" width="12" height="12" fill="none" stroke="#646464" stroke-width="1.3"/><rect x="1" y="1" width="12" height="12" fill="#535353" stroke="#707070" stroke-width="1.4"/><rect x="5.5" y="6" width="7.5" height="7" fill="#6c6c6c"/></svg>
<svg style="left:1692px;top:431px;" width="25" height="18" viewBox="0 0 25 18"><path d="M1 0.5V8.3H6" fill="none" stroke="#d2d2d2" stroke-width="1.5"/><path d="M5.3 4.4L9.8 8.3L5.3 12.2Z" fill="#d2d2d2"/><rect x="10.7" y="3.4" width="13" height="13.3" fill="none" stroke="#d2d2d2" stroke-width="1.6"/><path d="M17.2 6.2V13.8M13.4 10H21" stroke="#d2d2d2" stroke-width="1.5"/></svg>
<svg style="left:1738px;top:431.5px;" width="19" height="19" viewBox="0 0 19 19"><rect x="1" y="1.2" width="16.3" height="16.3" fill="none" stroke="#dadada" stroke-width="1.7"/><path d="M9.2 4.8V13.8M4.7 9.3H13.7" stroke="#dadada" stroke-width="1.6"/></svg>
<svg style="left:1777.7px;top:430.3px;" width="18.0" height="20.0" viewBox="0 0 18.0 20.0"><g transform="scale(1.0)"><path d="M0.5 4.3H17.2" stroke="#707070" stroke-width="1.4"/><path d="M5.3 4V1.6C5.3 1 5.7 0.7 6.3 0.7H11.4C12 0.7 12.4 1 12.4 1.6V4" fill="none" stroke="#707070" stroke-width="1.3"/><path d="M2.3 4.5V17.2C2.3 18.2 3 18.8 4 18.8H13.7C14.7 18.8 15.4 18.2 15.4 17.2V4.5" fill="none" stroke="#707070" stroke-width="1.4"/><path d="M5.8 7V16.2M8.85 7V16.2M11.9 7V16.2" stroke="#707070" stroke-width="1.3"/></g></svg>
<div style="left:1459px;top:456px;width:381px;height:2.2px;background:#151515;"></div>
<div style="left:1459px;top:458.2px;width:381px;height:10.4px;background:#4d4d4d;"></div>
<svg style="left:1635.2px;top:459.5px;" width="30" height="6" viewBox="0 0 30 6"><rect x="0.00" y="0" width="1.1" height="6" fill="#2e2e2e"/><rect x="3.05" y="0" width="1.1" height="6" fill="#2e2e2e"/><rect x="6.10" y="0" width="1.1" height="6" fill="#2e2e2e"/><rect x="9.15" y="0" width="1.1" height="6" fill="#2e2e2e"/><rect x="12.20" y="0" width="1.1" height="6" fill="#2e2e2e"/><rect x="15.25" y="0" width="1.1" height="6" fill="#2e2e2e"/><rect x="18.30" y="0" width="1.1" height="6" fill="#2e2e2e"/><rect x="21.35" y="0" width="1.1" height="6" fill="#2e2e2e"/><rect x="24.40" y="0" width="1.1" height="6" fill="#2e2e2e"/><rect x="27.45" y="0" width="1.1" height="6" fill="#2e2e2e"/></svg>
<div style="left:1472px;top:503px;width:366px;height:343px;background:#2d2d2d;border-radius:6px 5px 0 0;box-shadow:-3px 3px 7px rgba(0,0,0,0.4);"></div>
<div style="left:1472.5px;top:503px;width:363.3px;height:20.5px;background:#424242;border-radius:6px 5px 0 0;"></div>
<div style="left:1473.3px;top:524.6px;width:362.5px;height:42.2px;background:#424242;"></div>
<div style="left:1473.3px;top:524.6px;width:78px;height:42.5px;background:#535353;"></div>
<div style="left:1473.3px;top:566.7px;width:362.5px;height:278px;background:#535353;"></div>
<div style="left:1472px;top:845px;width:366px;height:1.5px;background:#2a2a2a;"></div>
<svg style="left:1790px;top:511.5px;" width="13" height="8" viewBox="0 0 13 8"><path d="M4.6 0.6L0.9 3.5L4.6 6.4M10.9 0.6L7.2 3.5L10.9 6.4" fill="none" stroke="#dcdcdc" stroke-width="1.5"/></svg>
<svg style="left:1817.3px;top:510.3px;" width="10" height="10" viewBox="0 0 10 10"><path d="M0.6 0.6L9.3 9.3M9.3 0.6L0.6 9.3" stroke="#e2e2e2" stroke-width="1.7" fill="none"/></svg>
<svg style="left:1481px;top:536.5px;" width="9" height="14" viewBox="0 0 9 14"><path d="M0.7 5.2L4.2 1.2L7.7 5.2M0.7 8.6L4.2 12.6L7.7 8.6" fill="none" stroke="#9c9c9c" stroke-width="1.6"/></svg>
<span class="t" style="left:1496.63px;top:534.20px;font-size:16.3px;color:#f6f6f6;font-weight:bold;transform:scaleX(0.9928);">Align</span>
<svg style="left:1810.3px;top:540px;" width="17" height="12" viewBox="0 0 17 12"><path d="M0 0.8H16.5M0 5.6H16.5M0 10.4H16.5" stroke="#d2d2d2" stroke-width="1.4"/></svg>
<span class="t" style="left:1481.07px;top:581.42px;font-size:16.4px;color:#d4d4d4;transform:scaleX(0.9651);">Align Objects:</span>
<span class="t" style="left:1479.76px;top:673.72px;font-size:16.4px;color:#d4d4d4;transform:scaleX(0.9840);">Distribute Objects:</span>
<span class="t" style="left:1479.82px;top:767.12px;font-size:16.4px;color:#d4d4d4;transform:scaleX(0.9706);">Distribute Spacing:</span>
<span class="t" style="left:1766.03px;top:768.12px;font-size:16.4px;color:#d4d4d4;transform:scaleX(0.9900);">Align To:</span>
<div style="left:1481px;top:659.5px;width:347px;height:1.2px;background:#494949;"></div>
<div style="left:1481px;top:751.7px;width:347px;height:1.2px;background:#494949;"></div>
<div style="left:1732.7px;top:761px;width:1.2px;height:74px;background:#494949;"></div>
<svg style="left:1470px;top:600px;" width="370" height="250" viewBox="0 0 370 250"><rect x="19.35" y="15.30" width="1.5" height="28.50" fill="#cbcbcb"/><rect x="22.70" y="18.50" width="12.60" height="9.10" rx="0.6" fill="#cbcbcb"/><rect x="22.70" y="30.80" width="20.30" height="8.20" rx="0.6" fill="#cbcbcb"/><rect x="87.15" y="15.30" width="1.5" height="28.50" fill="#cbcbcb"/><rect x="81.00" y="18.50" width="14.30" height="9.10" rx="0.6" fill="#cbcbcb"/><rect x="77.80" y="30.80" width="20.70" height="8.20" rx="0.6" fill="#cbcbcb"/><rect x="156.45" y="15.30" width="1.5" height="28.50" fill="#cbcbcb"/><rect x="142.30" y="18.50" width="12.60" height="9.10" rx="0.6" fill="#cbcbcb"/><rect x="134.10" y="30.80" width="20.80" height="8.20" rx="0.6" fill="#cbcbcb"/><rect x="209.80" y="16.85" width="28.50" height="1.5" fill="#cbcbcb"/><rect x="214.60" y="20.20" width="8.10" height="20.30" rx="0.6" fill="#cbcbcb"/><rect x="225.90" y="20.20" width="9.20" height="12.30" rx="0.6" fill="#cbcbcb"/><rect x="266.70" y="27.85" width="28.30" height="1.5" fill="#cbcbcb"/><rect x="271.30" y="18.50" width="7.90" height="20.30" rx="0.6" fill="#cbcbcb"/><rect x="282.70" y="21.70" width="9.30" height="13.60" rx="0.6" fill="#cbcbcb"/><rect x="323.20" y="40.45" width="28.80" height="1.5" fill="#cbcbcb"/><rect x="328.00" y="18.50" width="8.20" height="20.10" rx="0.6" fill="#cbcbcb"/><rect x="339.00" y="26.30" width="9.80" height="12.30" rx="0.6" fill="#cbcbcb"/><rect x="17.50" y="109.75" width="28.80" height="1.5" fill="#cbcbcb"/><rect x="25.50" y="112.80" width="13.30" height="6.70" rx="0.6" fill="#cbcbcb"/><rect x="17.50" y="124.25" width="28.80" height="1.5" fill="#cbcbcb"/><rect x="22.00" y="127.30" width="20.00" height="8.20" rx="0.6" fill="#cbcbcb"/><rect x="74.30" y="115.05" width="28.70" height="1.5" fill="#cbcbcb"/><rect x="82.50" y="112.50" width="12.00" height="6.80" rx="0.6" fill="#cbcbcb"/><rect x="74.30" y="129.45" width="28.70" height="1.5" fill="#cbcbcb"/><rect x="78.80" y="126.80" width="19.50" height="7.00" rx="0.6" fill="#cbcbcb"/><rect x="139.30" y="110.50" width="12.70" height="6.30" rx="0.6" fill="#cbcbcb"/><rect x="131.30" y="118.55" width="28.70" height="1.5" fill="#cbcbcb"/><rect x="136.30" y="125.00" width="19.20" height="7.00" rx="0.6" fill="#cbcbcb"/><rect x="131.30" y="134.25" width="28.70" height="1.5" fill="#cbcbcb"/><rect x="211.05" y="108.80" width="1.5" height="28.20" fill="#cbcbcb"/><rect x="214.50" y="113.50" width="8.00" height="18.80" rx="0.6" fill="#cbcbcb"/><rect x="227.25" y="108.80" width="1.5" height="28.20" fill="#cbcbcb"/><rect x="230.80" y="117.00" width="6.20" height="12.50" rx="0.6" fill="#cbcbcb"/><rect x="273.05" y="108.80" width="1.5" height="28.20" fill="#cbcbcb"/><rect x="270.00" y="113.30" width="8.00" height="19.20" rx="0.6" fill="#cbcbcb"/><rect x="287.25" y="108.80" width="1.5" height="28.20" fill="#cbcbcb"/><rect x="284.30" y="117.00" width="7.70" height="12.50" rx="0.6" fill="#cbcbcb"/><rect x="324.50" y="113.30" width="8.00" height="19.20" rx="0.6" fill="#cbcbcb"/><rect x="334.25" y="108.80" width="1.5" height="28.20" fill="#cbcbcb"/><rect x="340.80" y="117.00" width="6.20" height="12.50" rx="0.6" fill="#cbcbcb"/><rect x="349.25" y="108.80" width="1.5" height="28.20" fill="#cbcbcb"/><rect x="27.00" y="204.50" width="13.00" height="8.50" rx="0.6" fill="#cbcbcb"/><rect x="25.50" y="218.80" width="19.50" height="8.00" rx="0.6" fill="#cbcbcb"/><rect x="20.05" y="211.00" width="1.3" height="12.00" fill="#cbcbcb"/><rect x="17.80" y="213.20" width="5.80" height="1.2" fill="#cbcbcb"/><rect x="17.80" y="218.90" width="5.80" height="1.2" fill="#cbcbcb"/><rect x="69.30" y="209.50" width="8.20" height="18.50" rx="0.6" fill="#cbcbcb"/><rect x="81.80" y="210.80" width="10.00" height="12.20" rx="0.6" fill="#cbcbcb"/><rect x="72.50" y="203.65" width="14.30" height="1.3" fill="#cbcbcb"/><rect x="75.90" y="201.30" width="1.2" height="6.00" fill="#cbcbcb"/><rect x="81.90" y="201.30" width="1.2" height="6.00" fill="#cbcbcb"/></svg>
<div style="left:1578.8px;top:798px;width:121.3px;height:32.5px;background:#5a5a5a;border-radius:4px;"></div>
<div style="left:1606.3px;top:799px;width:1px;height:30.5px;background:#545454;"></div>
<svg style="left:1587.5px;top:804px;" width="13" height="21" viewBox="0 0 13 21"><path d="M1 6.3L6.3 1.2L11.6 6.3M1 14.5L6.3 19.6L11.6 14.5" fill="none" stroke="#6d6d6d" stroke-width="1.5"/></svg>
<span class="t" style="left:1612.61px;top:806.42px;font-size:16.4px;color:#757575;transform:scaleX(0.9935);">0 px</span>
<svg style="left:1776px;top:803px;" width="40" height="25" viewBox="0 0 40 25"><path d="M6 7.2H15L19.7 12V22.8H6Z" fill="none" stroke="#686868" stroke-width="1.3"/><path d="M15 7.2V12H19.7" fill="none" stroke="#686868" stroke-width="1.2"/><path d="M6 1.5V5M1.2 7.2H4.5" stroke="#686868" stroke-width="1.2"/><path d="M27 11.2L32.4 16.3L37.8 11.2" fill="none" stroke="#6d6d6d" stroke-width="1.5"/></svg>
<div style="left:1835.8px;top:468.5px;width:1.6px;height:611.5px;background:#3e3e3e;"></div>
<div style="left:1837.3px;top:102px;width:2.4px;height:15px;background:#242424;"></div>
<div style="left:1838.4px;top:117px;width:1.3px;height:351.5px;background:#242424;"></div>
<div style="left:1837.3px;top:468.5px;width:2.4px;height:611.5px;background:#242424;"></div>
<div style="left:1839.7px;top:102px;width:1.1px;height:978px;background:#474747;"></div>
<div style="left:1840.8px;top:102px;width:80px;height:18px;background:#434343;"></div>
<div style="left:1840.8px;top:119.6px;width:80px;height:1.4px;background:#363636;"></div>
<div style="left:1840.8px;top:121px;width:80px;height:959px;background:#535353;"></div>
<div style="left:1842px;top:272.40000000000003px;width:78px;height:1.8px;background:#3d3d3d;"></div>
<div style="left:1842px;top:380.6px;width:78px;height:1.8px;background:#3d3d3d;"></div>
<div style="left:1842px;top:445.40000000000003px;width:78px;height:1.8px;background:#3d3d3d;"></div>
<div style="left:1842px;top:509.8px;width:78px;height:1.8px;background:#3d3d3d;"></div>
<div style="left:1842px;top:574.8000000000001px;width:78px;height:1.8px;background:#3d3d3d;"></div>
<svg style="left:1913px;top:125.8px;" width="8" height="6.4" viewBox="0 0 8 6.4"><rect x="0.00" y="0" width="1.1" height="6.3" fill="#333"/><rect x="3.05" y="0" width="1.1" height="6.3" fill="#333"/><rect x="6.10" y="0" width="1.1" height="6.3" fill="#333"/></svg>
<svg style="left:1913px;top:279.2px;" width="8" height="6.4" viewBox="0 0 8 6.4"><rect x="0.00" y="0" width="1.1" height="6.3" fill="#333"/><rect x="3.05" y="0" width="1.1" height="6.3" fill="#333"/><rect x="6.10" y="0" width="1.1" height="6.3" fill="#333"/></svg>
<svg style="left:1913px;top:387.5px;" width="8" height="6.4" viewBox="0 0 8 6.4"><rect x="0.00" y="0" width="1.1" height="6.3" fill="#333"/><rect x="3.05" y="0" width="1.1" height="6.3" fill="#333"/><rect x="6.10" y="0" width="1.1" height="6.3" fill="#333"/></svg>
<svg style="left:1913px;top:452.5px;" width="8" height="6.4" viewBox="0 0 8 6.4"><rect x="0.00" y="0" width="1.1" height="6.3" fill="#333"/><rect x="3.05" y="0" width="1.1" height="6.3" fill="#333"/><rect x="6.10" y="0" width="1.1" height="6.3" fill="#333"/></svg>
<svg style="left:1913px;top:516.7px;" width="8" height="6.4" viewBox="0 0 8 6.4"><rect x="0.00" y="0" width="1.1" height="6.3" fill="#333"/><rect x="3.05" y="0" width="1.1" height="6.3" fill="#333"/><rect x="6.10" y="0" width="1.1" height="6.3" fill="#333"/></svg>
<div style="left:1849.6px;top:183.8px;width:80px;height:35.5px;background:#3a3a3a;border:1px solid #4b4b4b;border-radius:4px;"></div>
<div style="left:1895px;top:142.9px;width:25px;height:30px;overflow:hidden"><span class="t" style="left:5.17px;top:6.78px;font-size:16.8px;color:#f6f6f6;font-weight:bold;transform:scaleX(0.8700);">Properties</span></div>
<div style="left:1895px;top:186.8px;width:25px;height:30px;overflow:hidden"><span class="t" style="left:5.17px;top:6.78px;font-size:16.8px;color:#f6f6f6;font-weight:bold;transform:scaleX(0.8700);">Layers</span></div>
<div style="left:1895px;top:231px;width:25px;height:30px;overflow:hidden"><span class="t" style="left:5.17px;top:6.78px;font-size:16.8px;color:#f6f6f6;font-weight:bold;transform:scaleX(0.8700);">Libraries</span></div>
<div style="left:1895px;top:295.8px;width:25px;height:30px;overflow:hidden"><span class="t" style="left:4.96px;top:6.78px;font-size:16.8px;color:#f6f6f6;font-weight:bold;transform:scaleX(0.8700);">Swatches</span></div>
<div style="left:1895px;top:340px;width:25px;height:30px;overflow:hidden"><span class="t" style="left:5.17px;top:6.78px;font-size:16.8px;color:#f6f6f6;font-weight:bold;transform:scaleX(0.8700);">Brushes</span></div>
<div style="left:1895px;top:404.2px;width:25px;height:30px;overflow:hidden"><span class="t" style="left:4.96px;top:6.78px;font-size:16.8px;color:#f6f6f6;font-weight:bold;transform:scaleX(0.8700);">Symbols</span></div>
<div style="left:1895px;top:469.2px;width:25px;height:30px;overflow:hidden"><span class="t" style="left:5.68px;top:6.78px;font-size:16.8px;color:#f6f6f6;font-weight:bold;transform:scaleX(0.8700);">Color</span></div>
<div style="left:1895px;top:533.3px;width:25px;height:30px;overflow:hidden"><span class="t" style="left:5.68px;top:6.78px;font-size:16.8px;color:#f6f6f6;font-weight:bold;transform:scaleX(0.8700);">Color Guide</span></div>
<svg style="left:1859px;top:143px;" width="30" height="31" viewBox="0 0 30 31"><path d="M10 1.2L18.6 5.5V15L10 19.5L1.4 15V5.5Z" fill="#6a6a6a" stroke="#c6c6c6" stroke-width="1.3" stroke-linejoin="round"/><path d="M1.4 5.5L10 10L18.6 5.5M10 10V19.5" fill="none" stroke="#c6c6c6" stroke-width="1.3"/><path d="M2.2 6.8L9.3 10.5V18.3L2.2 14.6Z" fill="#8a8a8a"/><rect x="21.4" y="2.8" width="6.9" height="6.3" fill="#c6c6c6"/><rect x="21.4" y="12.2" width="6.9" height="6.3" fill="#c6c6c6"/><rect x="1.3" y="23" width="27" height="6.3" fill="#c6c6c6"/><path d="M21.3 25L26 25L23.65 27.8Z" fill="#444"/></svg>
<svg style="left:1860px;top:189px;" width="28" height="29" viewBox="0 0 28 29"><path d="M0.4 9.6L13.5 0.6L26.7 9.6L13.5 18.6Z" fill="#c6c6c6"/><path d="M0.4 18.2L4.4 15.5L13.5 21.7L22.6 15.5L26.7 18.2L13.5 27.6Z" fill="#c6c6c6"/></svg>
<svg style="left:1859px;top:232px;" width="28" height="28" viewBox="0 0 28 28"><rect x="1.4" y="1.5" width="20.5" height="21.5" fill="none" stroke="#a8a8a8" stroke-width="1.3"/><rect x="4.6" y="5" width="21" height="21.2" fill="#535353" stroke="#c6c6c6" stroke-width="1.4"/><path d="M15 5V16.6L18 14.6L21 16.6V5Z" fill="#c6c6c6"/></svg>
<svg style="left:1860px;top:302px;" width="26" height="19" viewBox="0 0 26 19"><rect x="0.7" y="0.7" width="24.6" height="17" rx="1.6" fill="#bdbdbd"/><rect x="2.6" y="2.4" width="5.8" height="5.8" fill="#7c7c7c"/><rect x="10.1" y="2.4" width="5.8" height="5.8" fill="#c4c4c4"/><rect x="17.6" y="2.4" width="5.8" height="5.8" fill="#6e6e6e"/><rect x="2.6" y="9.9" width="5.8" height="5.8" fill="#777"/><rect x="10.1" y="9.9" width="5.8" height="5.8" fill="#808080"/><rect x="17.6" y="9.9" width="5.8" height="5.8" fill="#7e7e7e"/></svg>
<svg style="left:1860px;top:338px;" width="28" height="33" viewBox="0 0 28 33"><rect x="7.3" y="23" width="13.2" height="9.2" rx="0.8" fill="#c6c6c6"/><path d="M13 23L12.2 9M15 23L20.5 11.5M11 23L5.5 14" stroke="#c6c6c6" stroke-width="1.6" fill="none"/><path d="M10.5 2H14V4.5H15.3V8H9.5V4.5H10.5Z" fill="#c6c6c6"/><path d="M16.8 8.5C19.5 6 24.5 7 26.3 11.5L21.3 12.6Z" fill="#c6c6c6"/><path d="M3.8 6.3C6.5 9.5 8.3 12 7 15.5C5 16.5 2 15 1.7 12C1.5 10 2.8 8.5 3.8 6.3Z" fill="#c6c6c6"/></svg>
<svg style="left:1860px;top:405px;" width="28" height="29" viewBox="0 0 28 29"><circle cx="13.7" cy="6.8" r="5.8" fill="#c6c6c6"/><circle cx="6.6" cy="14.8" r="5.9" fill="#c6c6c6"/><circle cx="20.8" cy="14.8" r="5.9" fill="#c6c6c6"/><circle cx="13.7" cy="13" r="3.5" fill="#c6c6c6"/><path d="M12.3 12H15.1C15.1 19 16.3 22.4 19.5 24.6H22.5V26.9H5V24.6H8C11.2 22.4 12.3 19 12.3 12Z" fill="#c6c6c6"/></svg>
<svg style="left:1858px;top:471px;" width="32" height="25" viewBox="0 0 32 25"><path d="M13 4.5C11.5 2.5 14 1 17.5 1C24.5 1 30.6 5.5 30.6 12.5C30.6 19 24 23.8 15.5 23.8C7 23.8 0.6 20.5 0.6 15.5C0.6 11.5 4.5 9.8 9.5 10.2C12.5 10.4 14.5 8.5 13 4.5Z" fill="#c6c6c6"/><circle cx="7.9" cy="16" r="2.7" fill="#555"/><circle cx="15" cy="18.2" r="2.7" fill="#555"/><circle cx="21.8" cy="17.3" r="2.1" fill="#555"/><circle cx="25.7" cy="13.3" r="2" fill="#555"/><circle cx="24.3" cy="8.6" r="1.7" fill="#555"/></svg>
<svg style="left:1861px;top:536px;" width="27" height="27" viewBox="0 0 27 27"><path d="M1.2 25.2V1.2C14 1.8 24.2 11 25.2 25.2Z" fill="#3a3a3a"/><path d="M1.2 25.2L6.5 2.2C9.5 3 12 4.2 14 5.6Z" fill="#5b5b5b"/><path d="M1.2 25.2L14 5.6C16.3 7.2 18.3 9.2 20 11.5Z" fill="#7d7d7d"/><path d="M1.2 25.2L20 11.5C21.7 13.8 23 16.3 24 19Z" fill="#a2a2a2"/><path d="M1.2 25.2L24 19C24.6 21 25 23 25.2 25.2Z" fill="#d6d6d6"/><path d="M1.2 25.2V1.2C14 1.8 24.2 11 25.2 25.2Z" fill="none" stroke="#c2c2c2" stroke-width="1.4" stroke-linejoin="round"/></svg>
</body></html>
